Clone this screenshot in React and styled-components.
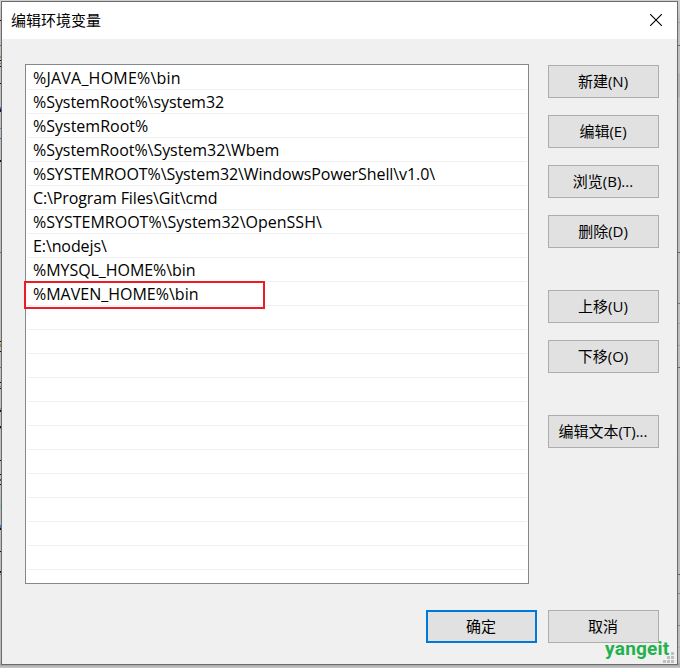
import styled, { createGlobalStyle } from "styled-components";

const paths = [
  { text: "%JAVA_HOME%\\bin", spacing: 0.22 },
  { text: "%SystemRoot%\\system32", spacing: -0.05 },
  { text: "%SystemRoot%", spacing: 0 },
  { text: "%SystemRoot%\\System32\\Wbem", spacing: -0.05 },
  { text: "%SYSTEMROOT%\\System32\\WindowsPowerShell\\v1.0\\", spacing: -0.08 },
  { text: "C:\\Program Files\\Git\\cmd", spacing: -0.12 },
  { text: "%SYSTEMROOT%\\System32\\OpenSSH\\", spacing: 0 },
  { text: "E:\\nodejs\\", spacing: -0.1 },
  { text: "%MYSQL_HOME%\\bin", spacing: -0.05 },
  { text: "%MAVEN_HOME%\\bin", spacing: 0 },
];

const emptyRows = Array.from({ length: 11 });

// bits of the window behind that show at the sides: [top, height, color]
const leftMarks = [
  [20, 1, "#111111"],
  [45, 1, "#6e6e6e"],
  [56, 2, "#a88964"],
  [60, 1, "#111111"],
  [63, 1, "#b06c2c"],
  [66, 1, "#111111"],
  [83, 1, "#111111"],
  [107, 2, "#2f7fd0"],
  [109, 3, "#141430"],
  [128, 1, "#3d8fd8"],
  [138, 1, "#1d78d0"],
  [160, 2, "#101030"],
  [252, 1, "#6e6e6e"],
  [341, 1, "#111111"],
  [344, 3, "#c08a3c"],
  [351, 1, "#111111"],
  [367, 1, "#6e6e6e"],
  [382, 1, "#111111"],
  [386, 1, "#c0702c"],
  [388, 1, "#111111"],
  [408, 2, "#c08a3c"],
  [410, 2, "#101040"],
  [426, 2, "#101060"],
  [428, 1, "#c0702c"],
  [460, 1, "#111111"],
  [474, 1, "#111111"],
  [479, 2, "#7a4a20"],
  [484, 1, "#111111"],
  [503, 7, "#8fc4c8"],
  [525, 3, "#3d7fc0"],
  [528, 2, "#111111"],
  [551, 1, "#111111"],
  [571, 2, "#301040"],
  [574, 1, "#6e6e6e"],
];

const rightMarks = [
  [22, 1, "#a8a8a8"],
  [45, 1, "#686868"],
  [73, 24, "#b4b4b4"],
  [252, 1, "#686868"],
  [303, 1, "#7a7a7a"],
  [323, 1, "#a4a4a4"],
  [345, 1, "#a4a4a4"],
  [367, 1, "#686868"],
  [574, 1, "#606060"],
  [593, 1, "#8c8c8c"],
  [625, 1, "#8c8c8c"],
  [647, 1, "#b0b0b0"],
];

export default function App() {
  return (
    <>
      <GlobalStyle />
      <Desktop>
        {leftMarks.map(([top, height, color]) => (
          <Mark key={top} $top={top} $height={height} $color={color} />
        ))}
        {rightMarks.map(([top, height, color]) => (
          <Mark key={top} $right $top={top} $height={height} $color={color} />
        ))}
        <Dialog>
          <TitleBar>
            <Title>编辑环境变量</Title>
            <CloseButton aria-label="关闭">
              <svg width="12" height="12" viewBox="0 0 12 12">
                <path d="M0 0L12 12M12 0L0 12" stroke="#000" strokeWidth="1.1" />
              </svg>
            </CloseButton>
          </TitleBar>
          <Content>
            <PathList>
              {paths.map((p) => (
                <Row key={p.text} $spacing={p.spacing}>
                  {p.text}
                </Row>
              ))}
              {emptyRows.map((_, i) => (
                <Row key={i} />
              ))}
              <Highlight />
            </PathList>
            <Actions>
              <Button>新建(N)</Button>
              <Button>编辑(E)</Button>
              <Button>浏览(B)...</Button>
              <Button>删除(D)</Button>
              <Button $top={42}>上移(U)</Button>
              <Button>下移(O)</Button>
              <Button $top={42}>编辑文本(T)...</Button>
            </Actions>
          </Content>
          <Footer>
            <Button $primary>确定</Button>
            <Button>取消</Button>
          </Footer>
          <Grip width="11" height="11" viewBox="0 0 11 11">
            <path
              d="M8 0h3v3h-3zM4 4h3v3h-3zM8 4h3v3h-3zM0 8h3v3h-3zM4 8h3v3h-3zM8 8h3v3h-3z"
              fill="#bfbfbf"
            />
          </Grip>
          <Watermark>yangeit</Watermark>
        </Dialog>
      </Desktop>
    </>
  );
}

const GlobalStyle = createGlobalStyle`
  * {
    box-sizing: border-box;
  }

  body {
    margin: 0;
    font-family: "Open Sans", "Noto Sans CJK SC", sans-serif;
    font-size: 15px;
    font-kerning: none;
    color: #000000;
  }
`;

const Desktop = styled.div`
  position: relative;
  width: 680px;
  height: 668px;
  padding: 1px;
  background: linear-gradient(#d0d0d0, #c0c0c0 20px, #bcbcbc 660px, #a6a6a6 665px, #cacaca);
  overflow: hidden;
`;

const Mark = styled.div`
  position: absolute;
  top: ${(props) => props.$top}px;
  left: ${(props) => (props.$right ? "678px" : 0)};
  width: 2px;
  height: ${(props) => props.$height}px;
  background: ${(props) => props.$color};
`;

const Dialog = styled.div`
  position: relative;
  width: 677px;
  height: 664px;
  border: 1px solid #6b6b6b;
  background: #f0f0f0;
`;

const TitleBar = styled.div`
  display: flex;
  justify-content: space-between;
  align-items: center;
  height: 37px;
  padding: 0 15px 2px 9px;
  background: #ffffff;
`;

const Title = styled.span`
  line-height: 20px;
`;

const CloseButton = styled.button`
  display: flex;
  padding: 0;
  border: none;
  background: none;
`;

const Content = styled.div`
  display: flex;
  gap: 19px;
  padding: 25px 0 0 23px;
`;

const PathList = styled.div`
  position: relative;
  width: 504px;
  height: 520px;
  padding: 1px;
  border: 1px solid #828790;
  background: #ffffff;
`;

const Row = styled.div`
  height: 24px;
  padding-left: 6px;
  border-bottom: 1px solid #f0f0f0;
  font-size: 16px;
  line-height: 24px;
  letter-spacing: ${(props) => props.$spacing || 0}px;
  white-space: nowrap;
`;

const Highlight = styled.div`
  position: absolute;
  left: -2px;
  top: 216px;
  width: 241px;
  height: 28px;
  border: 2px solid #ed1c24;
`;

const Actions = styled.div`
  display: flex;
  flex-direction: column;
  gap: 17px;
  padding-top: 1px;
`;

const Button = styled.button`
  width: 111px;
  height: 33px;
  margin-top: ${(props) => (props.$top ? `${props.$top - 17}px` : 0)};
  padding: 0 1px 2px 0;
  border: ${(props) => (props.$primary ? "2px solid #0078d7" : "1px solid #adadad")};
  background: #e1e1e1;
  font: inherit;
  font-kerning: none;
  color: #000000;
`;

const Footer = styled.div`
  display: flex;
  justify-content: flex-end;
  gap: 11px;
  padding: 26px 18px 0 0;
`;

const Grip = styled.svg`
  position: absolute;
  right: 3px;
  bottom: 1px;
`;

const Watermark = styled.div`
  position: absolute;
  left: 603px;
  bottom: 4px;
  color: #22b14c;
  font-family: Roboto, sans-serif;
  font-size: 19px;
  font-weight: 700;
  line-height: 22px;
  letter-spacing: 0.2px;
`;
